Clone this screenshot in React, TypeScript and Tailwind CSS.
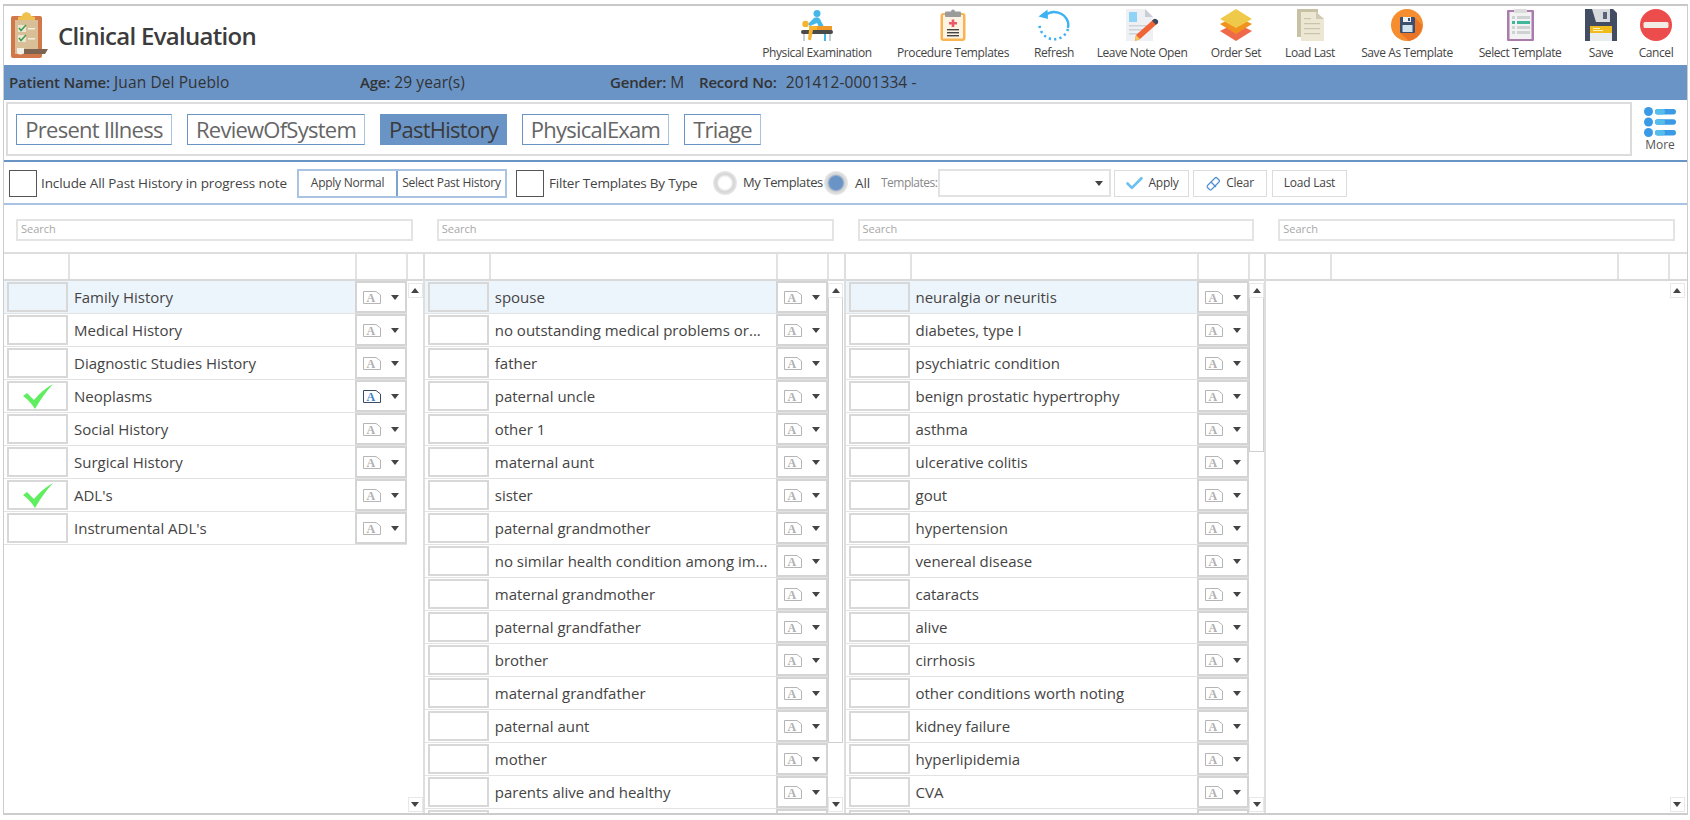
import { Check } from "lucide-react";

const col1 = [
  { name: "Family History" },
  { name: "Medical History" },
  { name: "Diagnostic Studies History" },
  { name: "Neoplasms", checked: true },
  { name: "Social History" },
  { name: "Surgical History" },
  { name: "ADL's", checked: true },
  { name: "Instrumental ADL's" },
];

const col2 = [
  "spouse",
  "no outstanding medical problems or...",
  "father",
  "paternal uncle",
  "other 1",
  "maternal aunt",
  "sister",
  "paternal grandmother",
  "no similar health condition among im...",
  "maternal grandmother",
  "paternal grandfather",
  "brother",
  "maternal grandfather",
  "paternal aunt",
  "mother",
  "parents alive and healthy",
  "",
].map((name) => ({ name }));

const col3 = [
  "neuralgia or neuritis",
  "diabetes, type I",
  "psychiatric condition",
  "benign prostatic hypertrophy",
  "asthma",
  "ulcerative colitis",
  "gout",
  "hypertension",
  "venereal disease",
  "cataracts",
  "alive",
  "cirrhosis",
  "other conditions worth noting",
  "kidney failure",
  "hyperlipidemia",
  "CVA",
  "",
].map((name) => ({ name }));

function ClipboardLogo() {
  return (
    <svg width="38" height="46" viewBox="0 0 38 46">
      <rect x="0" y="4" width="31" height="42" rx="2" fill="#d2774a" />
      <rect x="4" y="8" width="23" height="34" fill="#d9bf98" />
      <path d="M11 4 Q11 1 15.5 0 Q20 1 20 4 L24 5 V8 H7 V5 Z" fill="#efc14e" />
      <rect x="7" y="13" width="8" height="7" fill="#efe6d2" />
      <rect x="7" y="23" width="8" height="7" fill="#efe6d2" />
      <path d="M8 16 L10 18.5 L15 13" stroke="#3f9b4e" strokeWidth="1.5" fill="none" />
      <path d="M8 26 L10 28.5 L15 23" stroke="#3f9b4e" strokeWidth="1.5" fill="none" />
      <rect x="17" y="16" width="7" height="1.5" fill="#f4eee0" />
      <rect x="17" y="26" width="7" height="1.5" fill="#f4eee0" />
      <path d="M6 36 H13 V41 Q9 44 6 41 Z" fill="#f2efe6" />
      <path d="M13 37 H37 L34 42 H13 Z" fill="#7d6350" />
    </svg>
  );
}

function PhysicalIcon() {
  return (
    <svg width="34" height="32" viewBox="0 0 34 32">
      <circle cx="17" cy="4.5" r="3.5" fill="#45b6e8" />
      <path d="M14 9 Q18 7 20 10 L24 18 H19 L17 14 L10 17 L8 15 Z" fill="#45b6e8" />
      <circle cx="5.5" cy="15" r="3.2" fill="#f7b32b" />
      <rect x="9" y="17" width="15" height="5" fill="#f7b32b" />
      <rect x="17" y="17" width="15" height="5" fill="#ef9a28" />
      <rect x="1" y="21" width="32" height="4" rx="2" fill="#4a4a4a" />
      <path d="M9 21 H13 L11 31 Q9 32 8 30 Z" fill="#f7b32b" />
      <rect x="3" y="25" width="2" height="7" fill="#c7ced4" />
      <rect x="24" y="25" width="2" height="7" fill="#45b6e8" />
      <rect x="29" y="25" width="2" height="7" fill="#c7ced4" />
    </svg>
  );
}

function ProcedureIcon() {
  return (
    <svg width="26" height="32" viewBox="0 0 26 32">
      <rect x="0.5" y="4" width="25" height="28" rx="3" fill="#f9b451" />
      <rect x="3" y="6" width="20" height="23.5" fill="#fdf3e2" />
      <rect x="5" y="2.5" width="16" height="5.5" rx="1" fill="#9b9b9b" />
      <circle cx="13" cy="2.5" r="2" fill="#9b9b9b" />
      <path d="M11.7 10.5 H14.3 V13 H17 V15.5 H14.3 V18 H11.7 V15.5 H9 V13 H11.7 Z" fill="#ea5a66" />
      <rect x="7" y="20" width="12" height="1.4" fill="#444" />
      <rect x="7" y="23" width="12" height="1.4" fill="#444" />
      <rect x="7" y="26" width="12" height="1.4" fill="#444" />
    </svg>
  );
}

function RefreshIcon() {
  return (
    <svg width="34" height="34" viewBox="0 0 34 34">
      <path d="M8 7.5 A14.5 14.5 0 0 1 31 14 A14 14 0 0 1 31 20" stroke="#3db2f2" strokeWidth="2.4" fill="none" />
      <path d="M1.5 8.5 L10.5 1.5 L11 11 Z" fill="#3db2f2" />
      <path d="M31 21 A14.5 14.5 0 0 1 3 20 A14 14 0 0 1 2.5 15" stroke="#3db2f2" strokeWidth="2.6" strokeDasharray="2.2 3.2" fill="none" />
    </svg>
  );
}

function LeaveNoteIcon() {
  return (
    <svg width="34" height="32" viewBox="0 0 34 32">
      <path d="M1 0 H20 L28 8 V32 H1 Z" fill="#eef0f4" />
      <path d="M20 0 L28 8 H20 Z" fill="#c9ced6" />
      <rect x="4" y="3" width="8" height="10" fill="#8fd4f7" />
      <rect x="4" y="16" width="18" height="1.5" fill="#cdd3da" />
      <rect x="4" y="20" width="14" height="1.5" fill="#cdd3da" />
      <rect x="4" y="24" width="10" height="1.5" fill="#cdd3da" />
      <path d="M11 26 L29 10 L33 14 L15 30 L10 32 Z" fill="#ef6436" />
      <path d="M27 11.8 L29 10 Q31 9 33 11.5 Q33.5 13 33 14 L31 15.8 Z" fill="#3d4a5c" />
      <path d="M11 26 L15 30 L10 32 Z" fill="#f5c65a" />
    </svg>
  );
}

function OrderSetIcon() {
  return (
    <svg width="32" height="32" viewBox="0 0 32 32">
      <path d="M0 22 L16 14 L32 22 L16 32 Z" fill="#ef6a4a" />
      <path d="M0 15 L16 7 L32 15 L16 25 Z" fill="#f0921d" />
      <path d="M0 10 L16 0 L32 10 L16 19 Z" fill="#efca4a" />
    </svg>
  );
}

function LoadLastIcon() {
  return (
    <svg width="27" height="32" viewBox="0 0 27 32">
      <path d="M0 0 H21 V28 H0 Z" fill="#c7c1a6" />
      <path d="M4 3 H19 L27 10 V32 H4 Z" fill="#ebe7d3" />
      <path d="M19 3 L27 10 H19 Z" fill="#cfcab2" />
      <rect x="7" y="9" width="7" height="1.2" fill="#c9c4ab" />
      <rect x="7" y="14" width="16" height="1.2" fill="#c9c4ab" />
      <rect x="7" y="19" width="16" height="1.2" fill="#c9c4ab" />
      <rect x="7" y="24" width="16" height="1.2" fill="#c9c4ab" />
    </svg>
  );
}

function SaveTemplateIcon() {
  return (
    <svg width="32" height="32" viewBox="0 0 32 32">
      <circle cx="16" cy="16" r="16" fill="#f68d2e" />
      <path d="M9 24 L24 9 L31 16 A16 16 0 0 1 18 32 Z" fill="#ea7426" />
      <rect x="9" y="8" width="15" height="16" rx="1" fill="#3d4f6e" />
      <rect x="12" y="8" width="8" height="5" fill="#eef1f4" />
      <rect x="17" y="9" width="2" height="3" fill="#3d4f6e" />
      <rect x="11.5" y="16" width="10" height="7" fill="#cfe3ef" />
    </svg>
  );
}

function SelectTemplateIcon() {
  return (
    <svg width="27" height="32" viewBox="0 0 27 32">
      <rect x="0" y="1" width="27" height="31" rx="1" fill="#a97cab" />
      <rect x="2.5" y="3" width="22" height="27" fill="#f1f2f1" />
      <rect x="7" y="0" width="13" height="4" rx="1" fill="#dcdcdc" />
      <rect x="5" y="7" width="3" height="3" fill="#cfd2d2" />
      <rect x="10" y="7" width="13" height="3" fill="#cfd2d2" />
      <rect x="5" y="12" width="3" height="3" fill="#43b59b" />
      <rect x="10" y="12" width="13" height="3" fill="#43b59b" />
      <rect x="5" y="17" width="3" height="3" fill="#cfd2d2" />
      <rect x="10" y="17" width="13" height="3" fill="#cfd2d2" />
      <rect x="5" y="22" width="3" height="3" fill="#cfd2d2" />
      <rect x="10" y="22" width="13" height="3" fill="#cfd2d2" />
    </svg>
  );
}

function SaveIcon() {
  return (
    <svg width="32" height="32" viewBox="0 0 32 32">
      <path d="M0 0 H28 L32 4 V32 H0 Z" fill="#424c63" />
      <path d="M7 0 H25 V13 H11 Z" fill="#d9dade" />
      <rect x="18" y="3" width="4" height="7" fill="#5a6478" />
      <rect x="5" y="17" width="22" height="15" fill="#e9ecec" />
      <rect x="5" y="17" width="22" height="7" fill="#efbb1d" />
      <rect x="8" y="19" width="7" height="1" fill="#fff3c4" />
      <rect x="8" y="21" width="10" height="1" fill="#fff3c4" />
    </svg>
  );
}

function CancelIcon() {
  return (
    <svg width="32" height="32" viewBox="0 0 32 32">
      <circle cx="16" cy="16" r="16" fill="#ec4c4c" />
      <rect x="3.5" y="13" width="25" height="6" rx="1.5" fill="#f1ece6" />
    </svg>
  );
}

function MoreIcon() {
  return (
    <svg width="32" height="30" viewBox="0 0 32 30">
      <circle cx="4.5" cy="4.5" r="4.5" fill="#3a9ae6" />
      <circle cx="4.5" cy="15" r="4.5" fill="#3a9ae6" />
      <circle cx="4.5" cy="25.5" r="4.5" fill="#3a9ae6" />
      <rect x="11" y="2" width="21" height="5.5" rx="2.7" fill="#3a9ae6" />
      <rect x="11" y="12.3" width="21" height="5.5" rx="2.7" fill="#3a9ae6" />
      <rect x="11" y="23" width="21" height="5.5" rx="2.7" fill="#3a9ae6" />
      <rect x="11" y="2" width="10" height="5.5" rx="2.7" fill="#55bdec" />
      <rect x="11" y="12.3" width="10" height="5.5" rx="2.7" fill="#55bdec" />
      <rect x="11" y="23" width="10" height="5.5" rx="2.7" fill="#55bdec" />
    </svg>
  );
}

function Caret({ up = false }: { up?: boolean }) {
  return (
    <svg width="8" height="5" viewBox="0 0 8 5">
      <path d={up ? "M0 5 L4 0 L8 5 Z" : "M0 0 H8 L4 5 Z"} fill="#444" />
    </svg>
  );
}

function NoteIcon({ active = false, blank = false }: { active?: boolean; blank?: boolean }) {
  const line = active ? "#3b4a66" : "#b5b5b5";
  const letter = active ? "#3c82d0" : "#b0b0b0";
  return (
    <svg width="18" height="13" viewBox="0 0 18 13">
      <path d="M0.5 0.5 H13 L17.5 4 V12.5 H0.5 Z" fill="white" stroke={line} />
      {blank ? null : (
        <text x="3.5" y="11" fontSize="12" fontWeight="700" fontFamily="Liberation Serif, serif" fill={letter}>
          A
        </text>
      )}
    </svg>
  );
}

function CheckMark() {
  return (
    <svg width="32" height="26" viewBox="0 0 32 26">
      <path d="M1 13 L5 10 L12 17 Q20 7 31 1 Q21 12 13 26 Q8 18 1 13 Z" fill="#5fee5f" />
    </svg>
  );
}

function ArrowBtn({ up = false }: { up?: boolean }) {
  return (
    <div className="flex h-[15px] w-[15px] shrink-0 items-center justify-center border border-[#e8e8e8] bg-white">
      <Caret up={up} />
    </div>
  );
}

function Scrollbar({ thumb }: { thumb?: string }) {
  return (
    <div className="flex w-[16px] shrink-0 flex-col items-center pt-[2px] pb-[1px]">
      <ArrowBtn up />
      {thumb ? <div className={`${thumb} w-[15px] border border-t-0 border-[#cfcfcf]`} /> : null}
      <div className="flex-1" />
      <ArrowBtn />
    </div>
  );
}

function Row({ name, checked, active, first }: { name: string; checked?: boolean; active?: boolean; first?: boolean }) {
  return (
    <div className={`flex h-[33px] shrink-0 items-center border-b border-[#e2e2e2] pl-[3px] ${first ? "bg-[#edf5fc]" : "bg-white"}`}>
      <div className="flex h-[30px] w-[61px] shrink-0 items-center justify-center border-2 border-[#d8d8d8]">
        {checked ? <CheckMark /> : null}
      </div>
      <div className="min-w-0 flex-1 truncate pt-[1px] pl-[6px] text-[15px] text-[#444]">{name}</div>
      <div className="flex h-[32px] w-[52px] shrink-0 items-center justify-between border-2 border-[#d4d4d4] bg-white pr-[6px] pl-[6px]">
        <NoteIcon active={active} blank={!name} />
        <Caret />
      </div>
    </div>
  );
}

function GridColumn({ rows, thumb }: { rows: { name: string; checked?: boolean }[]; thumb?: string }) {
  return (
    <div className="flex min-h-0 flex-col overflow-hidden border-r-2 border-[#dedede] last:border-r-0">
      <div className="flex h-[27px] shrink-0 border-b-2 border-[#d9d9d9]">
        <div className="w-[66px] border-r-2 border-[#e2e2e2]" />
        <div className="w-[287px] border-r-2 border-[#e2e2e2]" />
        <div className="w-[51px] border-r-2 border-[#e2e2e2]" />
      </div>
      <div className="flex min-h-0 flex-1">
        <div className="flex w-[403px] shrink-0 flex-col overflow-hidden">
          {rows.map((r, i) => (
            <Row key={i} name={r.name} checked={r.checked} active={r.name === "Neoplasms"} first={i === 0} />
          ))}
        </div>
        <Scrollbar thumb={thumb} />
      </div>
    </div>
  );
}

function ToolButton({ label, width, children }: { label: string; width: string; children: React.ReactNode }) {
  return (
    <div className={`${width} flex shrink-0 flex-col items-center`}>
      <div className="flex h-[34px] items-center justify-center">{children}</div>
      <div className="mt-[2px] whitespace-nowrap text-[12px] tracking-[-0.4px] text-[#444]">{label}</div>
    </div>
  );
}

function SearchBox() {
  return (
    <div className="flex h-[22px] items-center border-2 border-[#e4e4e4] bg-white pl-[3px] text-[11px] text-[#a8a8a8]">
      Search
    </div>
  );
}

function Tab({ label, width, selected }: { label: string; width: string; selected?: boolean }) {
  return (
    <div
      className={`${width} flex h-[31px] items-center justify-center border text-[22px] tracking-[-0.75px] ${
        selected ? "border-[#6a93c6] bg-[#6a93c6] text-[#3a3a3a]" : "border-[#6a93c6] border-r-[#a9c3e2] bg-white text-[#666]"
      }`}
    >
      {label}
    </div>
  );
}

function Radio({ selected }: { selected?: boolean }) {
  return (
    <div
      className={`h-[24px] w-[24px] shrink-0 rounded-full ${
        selected
          ? "bg-[radial-gradient(circle,#6a93c6_38%,#d4d4d4_52%,#e8e8e8_70%)]"
          : "bg-[radial-gradient(circle,#ffffff_34%,#d4d4d4_52%,#e8e8e8_70%)]"
      }`}
    />
  );
}

export default function App() {
  return (
    <div className="h-[820px] w-[1690px] overflow-hidden bg-white pt-[4px] pr-[2px] pb-[5px] pl-[3px] font-['Open_Sans',sans-serif]">
      <div className="flex h-full flex-col border-x border-y-2 border-[#cccccc] border-t-[#c8c8c8]">
        {/* Title and actions */}
        <header className="flex h-[59px] shrink-0 items-start">
          <div className="flex items-center pt-[6px] pl-[7px]">
            <ClipboardLogo />
            <h1 className="mt-[2px] ml-[9px] text-[24px] font-semibold tracking-[-0.7px] text-[#3c3c3c]">Clinical Evaluation</h1>
          </div>
          <div className="ml-auto flex pt-[2px] pr-[12px]">
            <ToolButton label="Physical Examination" width="w-[148px]"><PhysicalIcon /></ToolButton>
            <ToolButton label="Procedure Templates" width="w-[124px]"><ProcedureIcon /></ToolButton>
            <ToolButton label="Refresh" width="w-[78px]"><RefreshIcon /></ToolButton>
            <ToolButton label="Leave Note Open" width="w-[98px]"><LeaveNoteIcon /></ToolButton>
            <ToolButton label="Order Set" width="w-[90px]"><OrderSetIcon /></ToolButton>
            <ToolButton label="Load Last" width="w-[58px]"><LoadLastIcon /></ToolButton>
            <ToolButton label="Save As Template" width="w-[136px]"><SaveTemplateIcon /></ToolButton>
            <ToolButton label="Select Template" width="w-[90px]"><SelectTemplateIcon /></ToolButton>
            <ToolButton label="Save" width="w-[72px]"><SaveIcon /></ToolButton>
            <ToolButton label="Cancel" width="w-[38px]"><CancelIcon /></ToolButton>
          </div>
        </header>

        {/* Patient banner */}
        <div className="flex h-[35px] shrink-0 items-center bg-[#6a93c6] pl-[5px] text-[15.5px] tracking-[0.1px] text-[#333]">
          <div className="w-[351px] whitespace-nowrap"><b className="text-[15px] font-semibold tracking-[-0.2px]">Patient Name:</b> Juan Del Pueblo</div>
          <div className="w-[250px] whitespace-nowrap"><b className="text-[15px] font-semibold tracking-[-0.2px]">Age:</b> 29 year(s)</div>
          <div className="w-[89px] whitespace-nowrap"><b className="text-[15px] font-semibold tracking-[-0.2px]">Gender:</b> M</div>
          <div className="whitespace-nowrap"><b className="text-[15px] font-semibold tracking-[-0.2px]">Record No:</b> <span className="ml-[5px]">201412-0001334 -</span></div>
        </div>

        {/* Section tabs */}
        <div className="flex h-[60px] shrink-0 pt-[2px] pl-[2px]">
          <div className="flex h-[54px] w-[1626px] items-center gap-[15px] border-2 border-[#dcdcdc] pl-[8px]">
            <Tab label="Present Illness" width="w-[156px]" />
            <Tab label="ReviewOfSystem" width="w-[178px]" />
            <Tab label="PastHistory" width="w-[127px]" selected />
            <Tab label="PhysicalExam" width="w-[147px]" />
            <Tab label="Triage" width="w-[77px]" />
          </div>
          <div className="flex flex-1 flex-col items-center pt-[5px] pl-[1px] text-[12px] leading-[16px] text-[#555]">
            <MoreIcon />
            <span>More</span>
          </div>
        </div>

        {/* Filter toolbar */}
        <div className="flex h-[45px] shrink-0 items-center border-y-2 border-t-[#6a93c6] border-b-[#a9c3e2] pt-[1px] text-[13.5px] tracking-[-0.1px] text-[#444]">
          <div className="ml-[5px] h-[27px] w-[28px] shrink-0 border border-[#555]" />
          <span className="ml-[4px] w-[256px] whitespace-nowrap">Include All Past History in progress note</span>
          <div className="flex h-[29px] border-2 border-[#a9c3e2] text-[12px] tracking-[-0.25px]">
            <div className="flex w-[99px] items-center justify-center border-r-2 border-[#7fa3cf]">Apply Normal</div>
            <div className="flex w-[107px] items-center justify-center">Select Past History</div>
          </div>
          <div className="ml-[9px] h-[27px] w-[28px] shrink-0 border border-[#555]" />
          <span className="ml-[5px] w-[164px] whitespace-nowrap tracking-[-0.2px]">Filter Templates By Type</span>
          <Radio />
          <span className="ml-[6px] w-[81px] whitespace-nowrap text-[13px] tracking-[-0.4px]">My Templates</span>
          <Radio selected />
          <span className="ml-[7px] w-[26px]">All</span>
          <span className="w-[57px] whitespace-nowrap text-[12px] tracking-[-0.5px] text-[#888]">Templates:</span>
          <div className="flex h-[28px] w-[173px] items-center justify-end border-2 border-[#e2e2e2] pr-[6px]">
            <Caret />
          </div>
          <div className="ml-[3px] flex h-[27px] w-[75px] items-center justify-center gap-[3px] border border-[#dcdcdc] text-[12px] tracking-[-0.25px]">
            <Check size={21} strokeWidth={3} className="text-[#6cc0f0]" />
            Apply
          </div>
          <div className="ml-[4px] flex h-[27px] w-[74px] items-center justify-center gap-[5px] border border-[#dcdcdc] text-[12px] tracking-[-0.25px]">
            <svg width="15" height="15" viewBox="0 0 15 15" fill="none" stroke="#4f8fd0" strokeWidth="1.2">
              <path d="M1.5 9.5 L9 2 Q10 1 11 2 L13 4 Q14 5 13 6 L5.5 13.5 Q4.5 14.3 3.5 13.5 L1.5 11.5 Q0.8 10.5 1.5 9.5 Z" />
              <path d="M5 6 L10 11" />
            </svg>
            Clear
          </div>
          <div className="ml-[5px] flex h-[27px] w-[75px] items-center justify-center border border-[#dcdcdc] text-[12px] tracking-[-0.25px]">Load Last</div>
        </div>

        {/* Search boxes */}
        <div className="grid h-[47px] shrink-0 grid-cols-4 items-center pt-[2px]">
          <div className="px-3"><SearchBox /></div>
          <div className="px-3"><SearchBox /></div>
          <div className="px-3"><SearchBox /></div>
          <div className="px-3"><SearchBox /></div>
        </div>

        {/* Lists */}
        <div className="grid min-h-0 flex-1 grid-cols-4 border-t-2 border-[#dedede]">
          <GridColumn rows={col1} />
          <GridColumn rows={col2} thumb="h-[445px]" />
          <GridColumn rows={col3} thumb="h-[154px]" />
          <GridColumn rows={[]} />
        </div>
      </div>
    </div>
  );
}
